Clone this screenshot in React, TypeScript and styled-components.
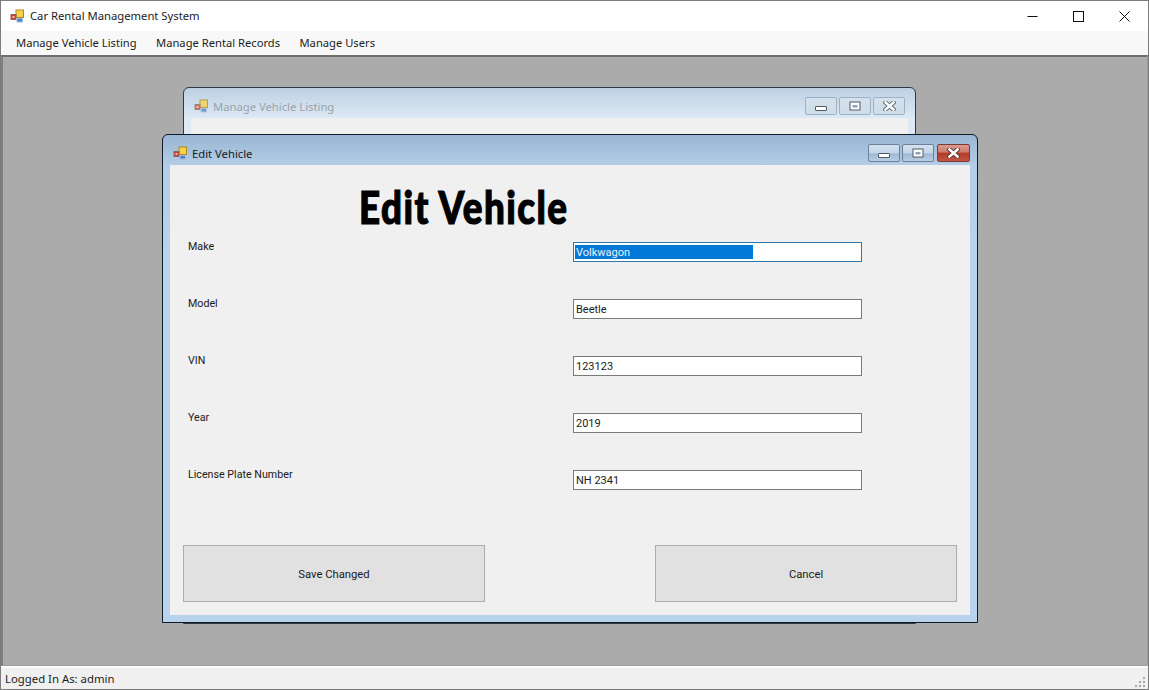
import React from "react";
import styled, { createGlobalStyle } from "styled-components";

const Global = createGlobalStyle`
  html, body { margin: 0; padding: 0; background: #fff; }
  * { box-sizing: border-box; }
`;

const Frame = styled.div`
  width: 1149px;
  height: 690px;
  border: 1px solid #7c7c7c;
  display: flex;
  flex-direction: column;
  overflow: hidden;
  background: #fff;
  font-family: "Noto Sans", "Open Sans", sans-serif;
  color: #1a1a1a;
`;

const TitleBar = styled.div`
  height: 30px;
  flex: none;
  display: flex;
  align-items: center;
  padding-left: 9px;
  background: #fff;
  font-size: 11.25px;
`;

const TitleText = styled.span`
  margin: 0 0 2px 6px;
  flex: 1;
`;

const CaptionGroup = styled.div`
  display: flex;
  height: 30px;
  margin-right: 1px;
`;

const CaptionButton = styled.div`
  width: 46px;
  display: flex;
  align-items: center;
  justify-content: center;
`;

const MenuBar = styled.div`
  height: 24px;
  flex: none;
  display: flex;
  align-items: center;
  padding: 0 0 2px 15px;
  gap: 19.4px;
  background: #f8f8f8;
  font-size: 11.2px;
`;

const MenuItem = styled.span`
  color: #1c1c1c;
`;

const MdiArea = styled.div`
  flex: 1;
  position: relative;
  background: #ababab;
  border: 1px solid #9a9a9a;
  border-top: 2px solid #6e6e6e;
  border-left: 2px solid #7e7e7e;
  border-bottom: 1px solid #a0a0a0;
`;

const StatusBar = styled.div`
  height: 23px;
  flex: none;
  display: flex;
  align-items: center;
  justify-content: space-between;
  background: #f0f0f0;
  border-top: 2px solid #fbfbfb;
  padding: 0 1px 0 4px;
  font-size: 11.35px;
  color: #1c1c1c;
`;

const MdiWindow = styled.div<{ $left: number; $top: number; $width: number; $height: number; $active?: boolean }>`
  position: absolute;
  left: ${(p) => p.$left}px;
  top: ${(p) => p.$top}px;
  width: ${(p) => p.$width}px;
  height: ${(p) => p.$height}px;
  display: flex;
  flex-direction: column;
  border: 1px solid ${(p) => (p.$active ? "#0e1a24" : "#2e3a46")};
  border-radius: 6px 6px 0 0;
  background: ${(p) =>
    p.$active
      ? "linear-gradient(180deg, #99b6d4 0, #b4cde6 30px, #b9d3ec 120px, #b9d3ec 100%)"
      : "linear-gradient(180deg, #bdd0e2 0, #dde9f5 30px, #dde9f5 100%)"};
`;

const WinTitle = styled.div<{ $active?: boolean }>`
  height: 30px;
  flex: none;
  display: flex;
  align-items: center;
  padding: 6px ${(p) => (p.$active ? 7 : 10)}px 0 10px;
  font-size: 11.25px;
  color: ${(p) => (p.$active ? "#1a1a1a" : "#98a2ac")};
`;

const WinTitleText = styled.span`
  margin-left: 5px;
  flex: 1;
`;

const WinButtons = styled.div`
  display: flex;
  gap: 2px;
`;

const WinButton = styled.div<{ $active?: boolean; $close?: boolean }>`
  width: ${(p) => (p.$close ? 33 : 32)}px;
  height: 18px;
  display: flex;
  align-items: center;
  justify-content: center;
  border-radius: 2px;
  border: 1px solid ${(p) => (p.$close ? "#7d3a34" : p.$active ? "#6b8099" : "#9db1c5")};
  background: ${(p) =>
    p.$close
      ? "linear-gradient(180deg, #d99a90 0, #cf7a6c 45%, #b23a28 50%, #c25544 100%)"
      : p.$active
        ? "linear-gradient(180deg, #d4e2f0 0, #c3d5e8 50%, #9fb8d2 55%, #b9cee3 100%)"
        : "linear-gradient(180deg, #d5e1ec 0, #cfdde9 100%)"};
  margin-left: ${(p) => (p.$close ? 1 : 0)}px;
`;

const WinClient = styled.div`
  flex: 1;
  margin: 0 7px 7px 7px;
  background: #f0f0f0;
  display: flex;
  flex-direction: column;
  font-family: Roboto, "Liberation Sans", Arial, sans-serif;
  font-size: 11.25px;
  color: #1a1a1a;
`;

const Heading = styled.h1`
  margin: 0;
  height: 77px;
  padding: 15px 0 0 189px;
  font-family: Lato, "DejaVu Sans", sans-serif;
  font-weight: 900;
  font-size: 46px;
  line-height: 54px;
  letter-spacing: 1.8px;
  color: #000;
  -webkit-text-stroke: 1.2px #000;
  white-space: nowrap;
`;

const HeadingText = styled.span`
  display: inline-block;
  transform: scaleX(0.8);
  transform-origin: left center;
`;

const Fields = styled.div`
  display: grid;
  grid-template-columns: 385px 289px;
  grid-auto-rows: 57px;
  padding-left: 18px;
`;

const FieldLabel = styled.label`
  margin-top: -2px;
  line-height: 14px;
  font-size: 10.7px;
`;

const TextBox = styled.div<{ $focused?: boolean }>`
  height: 20px;
  border: 1px solid ${(p) => (p.$focused ? "#2f78ae" : "#7a7a7a")};
  background: #fff;
  padding: 0 1px;
  display: flex;
  align-items: center;
  white-space: nowrap;
  font-size: 11px;
`;

const Selected = styled.span`
  display: block;
  width: 178px;
  height: 14px;
  line-height: 15px;
  background: #0078d7;
  color: #e8f2fb;
  padding-left: 1px;
`;

const Plain = styled.span`
  padding-left: 1px;
`;

const Actions = styled.div`
  display: flex;
  justify-content: space-between;
  padding: 18px 13px 0 13px;
`;

const ActionButton = styled.div`
  width: 302px;
  height: 57px;
  padding-top: 1px;
  background: #e1e1e1;
  border: 1px solid #adadad;
  display: flex;
  align-items: center;
  justify-content: center;
`;

const Grip = styled.svg`
  flex: none;
  margin-top: 6px;
`;

const IconSvg = styled.svg<{ $faded?: boolean }>`
  flex: none;
  opacity: ${(p) => (p.$faded ? 0.75 : 1)};
`;

const AppIcon = ({ faded }: { faded?: boolean }) => (
  <IconSvg $faded={faded} width="14" height="14" viewBox="0 0 14 14">
    <rect x="6" y="1" width="7.5" height="7.5" fill="#f6d24a" stroke="#b08a20" />
    <rect x="1" y="5.5" width="5" height="5" fill="#d23a2a" stroke="#8a6a60" />
    <rect x="2.5" y="7" width="2" height="2" fill="#f3c0b0" />
    <rect x="7" y="9.5" width="5.5" height="3.5" fill="#4a80d0" stroke="#a8bcd8" />
  </IconSvg>
);

const MinGlyph = () => (
  <svg width="12" height="12" viewBox="0 0 12 12">
    <rect x="0.5" y="6.5" width="11" height="4" rx="0.5" fill="#fff" stroke="#4f5a66" />
  </svg>
);
const MaxGlyph = () => (
  <svg width="12" height="10" viewBox="0 0 12 10">
    <rect x="1" y="1" width="10" height="8" fill="#fff" stroke="#4f5a66" />
    <rect x="3.5" y="4" width="5" height="2.5" fill="#8fa3b8" />
  </svg>
);
const CloseGlyph = ({ dark }: { dark?: boolean }) => (
  <svg width="13" height="10" viewBox="0 0 13 10">
    <path d="M2.5 1.5 L10.5 8.5 M10.5 1.5 L2.5 8.5" stroke={dark ? "#5a3028" : "#5c6875"} strokeWidth="4.4" strokeLinecap="square" />
    <path d="M2.5 1.5 L10.5 8.5 M10.5 1.5 L2.5 8.5" stroke="#fff" strokeWidth="2.6" strokeLinecap="square" />
  </svg>
);

const fields = [
  { label: "Make", value: "Volkwagon", focused: true },
  { label: "Model", value: "Beetle" },
  { label: "VIN", value: "123123" },
  { label: "Year", value: "2019" },
  { label: "License Plate Number", value: "NH 2341" },
];

export default function App() {
  return (
    <Frame>
      <Global />
      <TitleBar>
        <AppIcon />
        <TitleText>Car Rental Management System</TitleText>
        <CaptionGroup>
          <CaptionButton>
            <svg width="11" height="11" viewBox="0 0 11 11">
              <path d="M0.5 5.5 H10.5" stroke="#111" />
            </svg>
          </CaptionButton>
          <CaptionButton>
            <svg width="11" height="11" viewBox="0 0 11 11">
              <rect x="0.5" y="0.5" width="10" height="10" fill="none" stroke="#111" />
            </svg>
          </CaptionButton>
          <CaptionButton>
            <svg width="11" height="11" viewBox="0 0 11 11">
              <path d="M0.5 0.5 L10.5 10.5 M10.5 0.5 L0.5 10.5" stroke="#111" />
            </svg>
          </CaptionButton>
        </CaptionGroup>
      </TitleBar>
      <MenuBar>
        <MenuItem>Manage Vehicle Listing</MenuItem>
        <MenuItem>Manage Rental Records</MenuItem>
        <MenuItem>Manage Users</MenuItem>
      </MenuBar>
      <MdiArea>
        <MdiWindow $left={180} $top={30} $width={733} $height={537}>
          <WinTitle>
            <AppIcon faded />
            <WinTitleText>Manage Vehicle Listing</WinTitleText>
            <WinButtons>
              <WinButton><MinGlyph /></WinButton>
              <WinButton><MaxGlyph /></WinButton>
              <WinButton><CloseGlyph /></WinButton>
            </WinButtons>
          </WinTitle>
          <WinClient />
        </MdiWindow>
        <MdiWindow $left={159} $top={77} $width={816} $height={489} $active>
          <WinTitle $active>
            <AppIcon />
            <WinTitleText>Edit Vehicle</WinTitleText>
            <WinButtons>
              <WinButton $active><MinGlyph /></WinButton>
              <WinButton $active><MaxGlyph /></WinButton>
              <WinButton $close><CloseGlyph dark /></WinButton>
            </WinButtons>
          </WinTitle>
          <WinClient>
            <Heading><HeadingText>Edit Vehicle</HeadingText></Heading>
            <Fields>
              {fields.map((f) => (
                <React.Fragment key={f.label}>
                  <FieldLabel>{f.label}</FieldLabel>
                  <TextBox $focused={f.focused}>
                    {f.focused ? <Selected>{f.value}</Selected> : <Plain>{f.value}</Plain>}
                  </TextBox>
                </React.Fragment>
              ))}
            </Fields>
            <Actions>
              <ActionButton>Save Changed</ActionButton>
              <ActionButton>Cancel</ActionButton>
            </Actions>
          </WinClient>
        </MdiWindow>
      </MdiArea>
      <StatusBar>
        <span>Logged In As: admin</span>
        <Grip width="12" height="12" viewBox="0 0 12 12">
          <g fill="#a8a8a8">
            <rect x="8" y="1" width="2" height="2" />
            <rect x="4" y="5" width="2" height="2" />
            <rect x="8" y="5" width="2" height="2" />
            <rect x="0" y="9" width="2" height="2" />
            <rect x="4" y="9" width="2" height="2" />
            <rect x="8" y="9" width="2" height="2" />
          </g>
        </Grip>
      </StatusBar>
    </Frame>
  );
}
